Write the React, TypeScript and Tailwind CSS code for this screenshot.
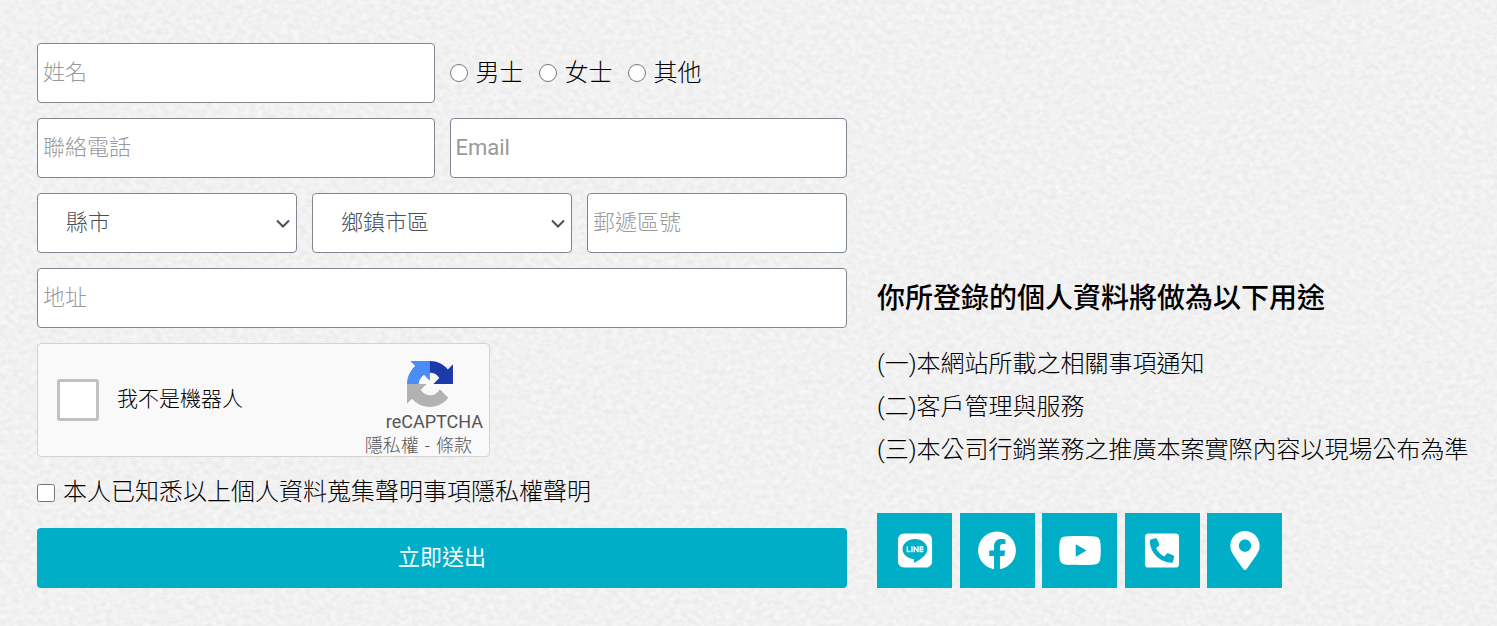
import { useState } from 'react';
import type { InputHTMLAttributes, SelectHTMLAttributes } from 'react';
import clsx from 'clsx';
import {
  FaFacebook,
  FaLine,
  FaMapMarkerAlt,
  FaPhoneSquareAlt,
  FaYoutube,
} from 'react-icons/fa';

const genders = ['男士', '女士', '其他'];

const usages = [
  '(一)本網站所載之相關事項通知',
  '(二)客戶管理與服務',
  '(三)本公司行銷業務之推廣本案實際內容以現場公布為準',
];

const links = [
  { label: 'LINE', Icon: FaLine },
  { label: 'Facebook', Icon: FaFacebook },
  { label: 'YouTube', Icon: FaYoutube },
  { label: '聯絡電話', Icon: FaPhoneSquareAlt },
  { label: '地圖', Icon: FaMapMarkerAlt },
];

const TextField = ({
  label,
  className,
  ...props
}: InputHTMLAttributes<HTMLInputElement> & { label: string }) => (
  <input
    aria-label={label}
    placeholder={label}
    className={clsx(
      'h-[60px] w-full min-w-0 rounded border border-[#7f8890] bg-white px-[5px] pb-[2px] text-[22px] text-[#495057] placeholder:text-[#999]',
      className,
    )}
    {...props}
  />
);

const SelectField = ({ label, ...props }: SelectHTMLAttributes<HTMLSelectElement> & { label: string }) => (
  <div className="relative">
    <select
      aria-label={label}
      className="h-[60px] w-full appearance-none rounded border border-[#7f8890] bg-white pr-8 pb-[2px] pl-7 text-[22px] text-[#495057]"
      {...props}
    >
      <option>{label}</option>
    </select>
    <svg
      viewBox="0 0 14 10"
      className="pointer-events-none absolute top-[26px] right-[7px] h-[10px] w-[14px]"
      fill="none"
      stroke="#495057"
      strokeWidth="2"
    >
      <path d="M1 1.5l6 6 6-6" />
    </svg>
  </div>
);

const PaperTexture = () => (
  <svg className="absolute inset-0 -z-10 h-full w-full" aria-hidden="true">
    <filter id="paper" x="0" y="0" width="100%" height="100%" colorInterpolationFilters="sRGB">
      <feTurbulence type="fractalNoise" baseFrequency="0.16 0.2" numOctaves="3" seed="7" />
      <feColorMatrix values="0.08 0 0 0 0.904  0.08 0 0 0 0.904  0.08 0 0 0 0.904  0 0 0 0 1" />
    </filter>
    <rect width="100%" height="100%" filter="url(#paper)" />
  </svg>
);

const RecaptchaLogo = () => (
  <svg viewBox="0 0 64 64" className="h-[46px] w-[46px]" aria-hidden="true">
    <path
      fill="#1c3aa9"
      d="M64 31.955l-.033-1.37V4.687l-7.16 7.16C50.948 4.674 42.033.093 32.05.093c-10.4 0-19.622 4.96-25.458 12.64l11.736 11.86a15.55 15.55 0 0 1 4.754-5.334c2.05-1.6 4.952-2.906 8.968-2.906.485 0 .86.057 1.135.163 4.976.393 9.288 3.14 11.828 7.124l-8.307 8.307L64 31.953"
    />
    <path
      fill="#4a8df6"
      d="M31.862.094l-1.37.033H4.594l7.16 7.16C4.58 13.147 0 22.06 0 32.046c0 10.4 4.96 19.622 12.64 25.458L24.5 45.768a15.55 15.55 0 0 1-5.334-4.754c-1.6-2.05-2.906-4.952-2.906-8.968 0-.485.057-.86.163-1.135.393-4.976 3.14-9.288 7.124-11.828l8.307 8.307L31.86.095"
    />
    <path
      fill="#b2b2b2"
      d="M.001 32.045l.033 1.37v25.898l7.16-7.16c5.86 7.173 14.774 11.754 24.76 11.754 10.4 0 19.622-4.96 25.458-12.64l-11.736-11.86a15.55 15.55 0 0 1-4.754 5.334c-2.05 1.6-4.952 2.906-8.968 2.906-.485 0-.86-.057-1.135-.163-4.976-.393-9.288-3.14-11.828-7.124l8.307-8.307c-10.522.04-22.4.066-27.295-.005"
    />
  </svg>
);

const Recaptcha = () => (
  <div className="flex h-[114px] w-full max-w-[453px] justify-between rounded border border-[#d3d3d3] bg-[#f9f9f9] pl-[19px]">
    <label className="flex items-center gap-[18px] text-[21px] text-black">
      <input
        type="checkbox"
        className="h-[42px] w-[42px] appearance-none rounded-[3px] border-3 border-[#c1c1c1] bg-white"
      />
      我不是機器人
    </label>
    <div className="flex flex-col items-end pt-[17px] pr-[6px] text-[#555]">
      <div className="flex w-[106px] justify-center">
        <RecaptchaLogo />
      </div>
      <div className="text-[18px] leading-[30px] font-normal">reCAPTCHA</div>
      <div className="flex gap-[6px] pr-[11px] text-[18px] leading-[18px]">
        <a href="#privacy">隱私權</a>
        <span>-</span>
        <a href="#terms">條款</a>
      </div>
    </div>
  </div>
);

export default function App() {
  const [gender, setGender] = useState('');

  return (
    <main className="relative isolate grid grid-cols-[810fr_600fr] gap-[30px] bg-[#f0f0f0] pt-[43px] pr-5 pb-[38px] pl-[37px] font-[Roboto,'Noto_Sans_CJK_TC',sans-serif] font-light text-black">
      <PaperTexture />

      <form className="flex flex-col gap-[15px]" onSubmit={(e) => e.preventDefault()}>
        <div className="grid grid-cols-2 gap-[15px]">
          <TextField label="姓名" name="name" />
          <div className="flex items-center gap-[15px]">
            {genders.map((item) => (
              <label key={item} className="flex items-center gap-2 text-[24px]">
                <input
                  type="radio"
                  name="gender"
                  className="h-[18px] w-[18px]"
                  checked={gender === item}
                  onChange={() => setGender(item)}
                />
                {item}
              </label>
            ))}
          </div>
          <TextField label="聯絡電話" name="phone" type="tel" />
          <TextField label="Email" name="email" type="email" className="font-normal" />
        </div>

        <div className="grid grid-cols-3 gap-[15px]">
          <SelectField label="縣市" name="city" />
          <SelectField label="鄉鎮市區" name="area" />
          <TextField label="郵遞區號" name="zip" />
        </div>

        <TextField label="地址" name="address" />
        <Recaptcha />

        <label className="flex items-center gap-2 text-[24px] leading-[41px]">
          <input type="checkbox" name="agree" className="h-[18px] w-[18px]" />
          本人已知悉以上個人資料蒐集聲明事項隱私權聲明
        </label>

        <button type="submit" className="h-[60px] rounded bg-[#00aec7] pb-[2px] text-[22px] font-normal text-white">
          立即送出
        </button>
      </form>

      <section className="flex flex-col justify-end">
        <h2 className="mb-[23px] text-[28px] leading-[42px] font-medium">你所登錄的個人資料將做為以下用途</h2>
        <ul className="mb-[41px] text-[24px] leading-[43px]">
          {usages.map((usage) => (
            <li key={usage}>{usage}</li>
          ))}
        </ul>
        <nav className="flex w-[405px] justify-between">
          {links.map(({ label, Icon }) => (
            <a
              key={label}
              href="#"
              aria-label={label}
              className="flex h-[75px] w-[75px] items-center justify-center bg-[#00aec7] text-white"
            >
              <Icon className="h-[39px] w-11" />
            </a>
          ))}
        </nav>
      </section>
    </main>
  );
}
